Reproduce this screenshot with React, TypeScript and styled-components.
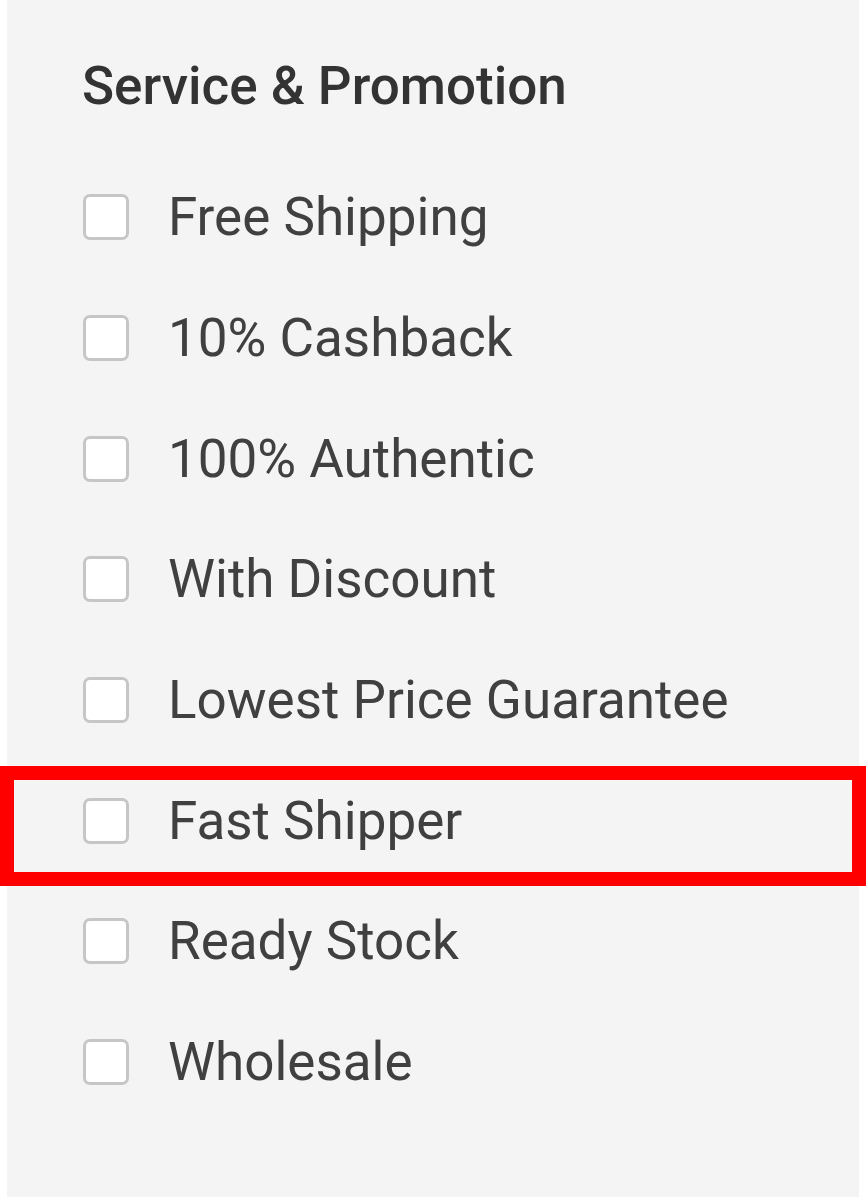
import styled, { createGlobalStyle } from 'styled-components';

const GlobalStyle = createGlobalStyle`
  html, body {
    margin: 0;
    padding: 0;
    background: #ffffff;
  }
  * {
    box-sizing: border-box;
  }
`;

const Page = styled.div`
  height: 1197px;
  padding: 0 7px;
  background: #ffffff;
  font-family: Roboto, 'Liberation Sans', sans-serif;
`;

const Panel = styled.aside`
  height: 100%;
  background: #f4f4f4;
  padding: 55px 0 0 75px;
`;

const Heading = styled.h3`
  margin: 0;
  font-size: 53px;
  font-weight: 500;
  line-height: normal;
  color: #333333;
`;

const OptionList = styled.div`
  display: flex;
  flex-direction: column;
  margin-top: 40px;
`;

const Row = styled.label<{ $highlighted?: boolean }>`
  position: relative;
  display: flex;
  align-items: center;
  gap: 39px;
  height: 120.7px;
  padding-left: 1px;
  cursor: pointer;

  &::after {
    content: '';
    display: ${(p) => (p.$highlighted ? 'block' : 'none')};
    position: absolute;
    left: -82px;
    right: -7px;
    top: 6px;
    bottom: -5px;
    border: 14px solid #ff0000;
    pointer-events: none;
  }
`;

const Box = styled.input`
  appearance: none;
  margin: 0;
  flex: 0 0 46px;
  width: 46px;
  height: 46px;
  background: #ffffff;
  border: 3px solid #c6c6c6;
  border-radius: 7px;
`;

const Label = styled.span`
  font-size: 53px;
  font-weight: 400;
  color: #404040;
  line-height: normal;
`;

const options = [
  'Free Shipping',
  '10% Cashback',
  '100% Authentic',
  'With Discount',
  'Lowest Price Guarantee',
  'Fast Shipper',
  'Ready Stock',
  'Wholesale',
];

const App = () => {
  return (
    <Page>
      <GlobalStyle />
      <Panel>
        <Heading>Service &amp; Promotion</Heading>
        <OptionList>
          {options.map((name) => (
            <Row key={name} $highlighted={name === 'Fast Shipper'}>
              <Box type="checkbox" />
              <Label>{name}</Label>
            </Row>
          ))}
        </OptionList>
      </Panel>
    </Page>
  );
};

export default App;
